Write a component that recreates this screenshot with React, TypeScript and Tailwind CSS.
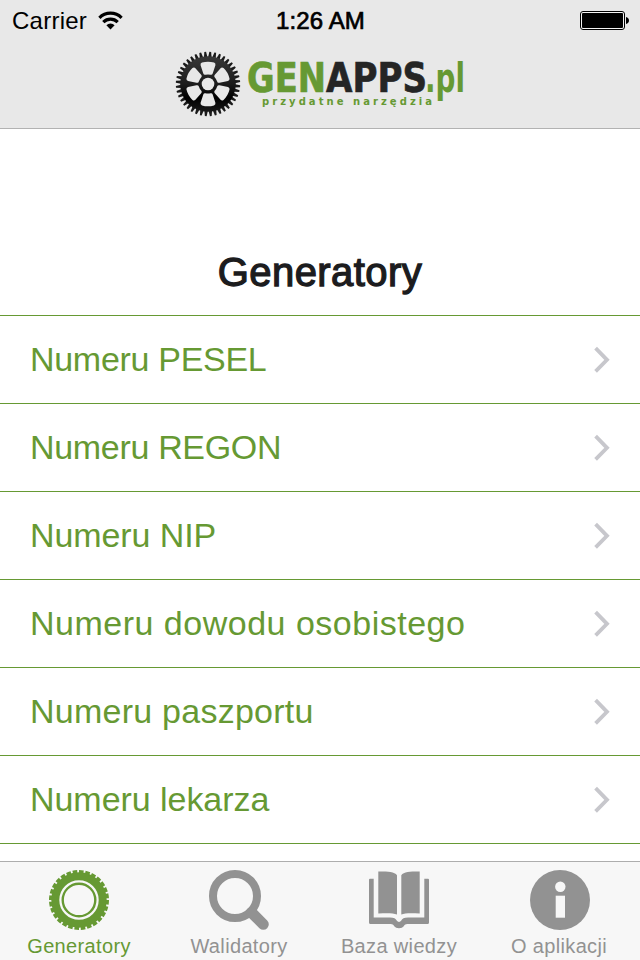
import { type ReactNode } from "react";

const GENERATORS = [
  { label: "Numeru PESEL", tracking: "tracking-[-0.3px]" },
  { label: "Numeru REGON", tracking: "tracking-[-0.32px]" },
  { label: "Numeru NIP", tracking: "tracking-[-0.1px]" },
  { label: "Numeru dowodu osobistego", tracking: "tracking-[0.5px]" },
  { label: "Numeru paszportu", tracking: "tracking-[0.25px]" },
  { label: "Numeru lekarza", tracking: "tracking-[-0.05px]" },
];

const range = (n: number) => Array.from({ length: n }, (_, i) => i);

function StatusBar() {
  return (
    <div className="grid h-[40px] grid-cols-3 items-center pl-[12px] pr-[11px] text-[24px] leading-[38px] text-black">
      <div className="flex items-center gap-[11px]">
        <span className="mt-[2px] tracking-[0.25px]">Carrier</span>
        <svg width="25" height="19" viewBox="0 0 25 19" fill="none" stroke="#000" strokeWidth="3.2">
          <path d="M1.4 6.8a15.7 15.7 0 0 1 22.2 0" />
          <path d="M5.3 11.1a10.2 10.2 0 0 1 14.4 0" />
          <path d="M12.5 18.6 8.4 14.3a5.8 5.8 0 0 1 8.2 0z" fill="#000" stroke="none" />
        </svg>
      </div>
      <span className="mt-[2px] text-center tracking-[0.1px] [-webkit-text-stroke:0.7px_#000]">
        1:26 AM
      </span>
      <svg className="justify-self-end" width="49" height="20" viewBox="0 -1 49 20">
        <rect x="0.5" y="0.5" width="44" height="18" rx="2.5" fill="#f4f4f4" stroke="#000" />
        <rect x="2" y="2" width="41" height="15" rx="1" />
        <path d="M46 6c1.8.5 3 1.8 3 3.5s-1.2 3-3 3.5z" />
      </svg>
    </div>
  );
}

function Cogwheel() {
  return (
    <svg className="shrink-0" width="66" height="66" viewBox="-33 -33 66 66">
      <defs>
        <linearGradient id="cog" x1="0" y1="0" x2="0" y2="1">
          <stop offset="0" stopColor="#383838" />
          <stop offset="0.5" stopColor="#1c1c1c" />
          <stop offset="0.75" stopColor="#000" />
          <stop offset="1" stopColor="#181818" />
        </linearGradient>
      </defs>
      <g fill="#1a1a1a">
        {range(40).map((i) => (
          <path key={i} d="M-1.7-27-.9-32.2H.9L1.7-27z" transform={`rotate(${i * 9 + 4})`} />
        ))}
      </g>
      <circle r="27.8" fill="url(#cog)" />
      <g fill="#e8e8e8">
        <circle r="6.3" />
        {range(6).map((i) => (
          <path
            key={i}
            d="M-6-21.4Q0-23.2 6-21.4 7.9-20.7 7.4-18.8L4.7-10.6Q4.2-8.9 2.6-9.2 0-9.8-2.6-9.2-4.2-8.9-4.7-10.6L-7.4-18.8Q-7.9-20.7-6-21.4z"
            transform={`rotate(${i * 60})`}
          />
        ))}
      </g>
    </svg>
  );
}

function Logo() {
  return (
    <div className="flex h-[88px] pl-[175px] pt-[11px]">
      <Cogwheel />
      <svg
        className="ml-[4px]"
        width="236"
        height="66"
        viewBox="0 0 236 66"
        fontFamily="'DejaVu Sans', sans-serif"
        fontWeight="700"
      >
        <g fontSize="40.5" strokeWidth="0.7">
          <text x="2" y="41" fill="#669933" stroke="#669933" textLength="79" lengthAdjust="spacingAndGlyphs">
            GEN
          </text>
          <text x="81" y="41" fill="#252525" stroke="#252525" textLength="101" lengthAdjust="spacingAndGlyphs">
            APPS
          </text>
          <text x="180" y="41" fill="#669933" textLength="40" lengthAdjust="spacingAndGlyphs">
            .pl
          </text>
        </g>
        <text x="17" y="54" fontSize="10" fill="#669933" textLength="170">
          przydatne narzędzia
        </text>
      </svg>
    </div>
  );
}

function Row({ label, tracking }: { label: string; tracking: string }) {
  return (
    <li className="flex h-[88px] items-center justify-between border-t border-[#669933] pl-[30px] pr-[30px]">
      <span className={`-mt-[2px] text-[34px] leading-[40px] text-[#669933] ${tracking}`}>{label}</span>
      <svg width="18" height="28" viewBox="0 0 18 28" fill="none" stroke="#c7c7cc" strokeWidth="3.8">
        <path d="M3.6 2.2 15 13.8 3.6 25.4" />
      </svg>
    </li>
  );
}

function TireIcon() {
  return (
    <svg width="60" height="60" viewBox="-30 -30 60 60">
      <circle r="23.7" fill="none" stroke="#669933" strokeWidth="8" />
      <circle r="28.4" fill="none" stroke="#669933" strokeWidth="3.2" pathLength="280" strokeDasharray="7.2 2.8" />
      <circle r="16.3" fill="none" stroke="#669933" strokeWidth="2.4" />
    </svg>
  );
}

function SearchIcon() {
  return (
    <svg width="60" height="60" viewBox="0 0 60 60" fill="none" stroke="#929292">
      <circle cx="26" cy="26" r="22" strokeWidth="8" />
      <path d="M42.5 42.5 54.3 54.3" strokeWidth="11" strokeLinecap="round" />
    </svg>
  );
}

function BookIcon() {
  return (
    <svg width="60" height="60" viewBox="0 0 60 60" fill="#929292">
      <path d="M9.3 1.4C17 1.4 25.5 1.2 28 5.2v39.4C24 42.8 17 43.4 9.3 43.4z" />
      <path d="M50.7 1.4C43 1.4 34.8 1.2 32.3 5.2v39.4C36 42.8 43 43.4 50.7 43.4z" />
      <path d="M0 9.7Q0 8.7 1 8.7H4.7V47.5H21C25 47.5 26.7 48.7 27.7 50.6Q28.7 52 30 52T32.3 50.6C33.3 48.7 35 47.5 39 47.5H55.3V8.7H59Q60 8.7 60 9.7V52.5Q60 54 58.5 54H38.5C36 54 35.5 55.2 34.5 56.6Q33.5 58.3 30 58.3T25.5 56.6C24.5 55.2 24 54 21.5 54H1.5Q0 54 0 52.5z" />
    </svg>
  );
}

function InfoIcon() {
  return (
    <svg className="ml-[2px]" width="60" height="60" viewBox="0 0 60 60">
      <circle cx="30" cy="30" r="30" fill="#929292" />
      <circle cx="30.3" cy="16.7" r="5.2" fill="#f7f7f7" />
      <path d="M25.7 25.7H35V47.7H25.7z" fill="#f7f7f7" />
    </svg>
  );
}

function Tab({ icon, label, active = false }: { icon: ReactNode; label: string; active?: boolean }) {
  return (
    <div
      className={`flex w-[160px] flex-col items-center pr-[2px] pt-[8px] ${active ? "text-[#669933]" : "text-[#929292]"}`}
    >
      {icon}
      <span className="mt-[4px] text-[20px] leading-[24px] tracking-[0.35px]">{label}</span>
    </div>
  );
}

export default function App() {
  return (
    <div className="flex h-[960px] w-[640px] flex-col overflow-hidden bg-white font-['Liberation_Sans',Arial,sans-serif]">
      <header className="h-[129px] shrink-0 border-b border-[#b2b2b2] bg-[#e8e8e8]">
        <StatusBar />
        <Logo />
      </header>
      <main className="flex-1">
        <h1 className="h-[186px] pt-[120px] text-center text-[40px] leading-[46px] tracking-[0.45px] text-[#1c1c1e] [-webkit-text-stroke:1.3px_#1c1c1e]">
          Generatory
        </h1>
        <ul className="border-b border-[#669933]">
          {GENERATORS.map((item) => (
            <Row key={item.label} {...item} />
          ))}
        </ul>
      </main>
      <nav className="flex h-[99px] shrink-0 border-t border-[#adadad] bg-[#f7f7f7]">
        <Tab icon={<TireIcon />} label="Generatory" active />
        <Tab icon={<SearchIcon />} label="Walidatory" />
        <Tab icon={<BookIcon />} label="Baza wiedzy" />
        <Tab icon={<InfoIcon />} label="O aplikacji" />
      </nav>
    </div>
  );
}
